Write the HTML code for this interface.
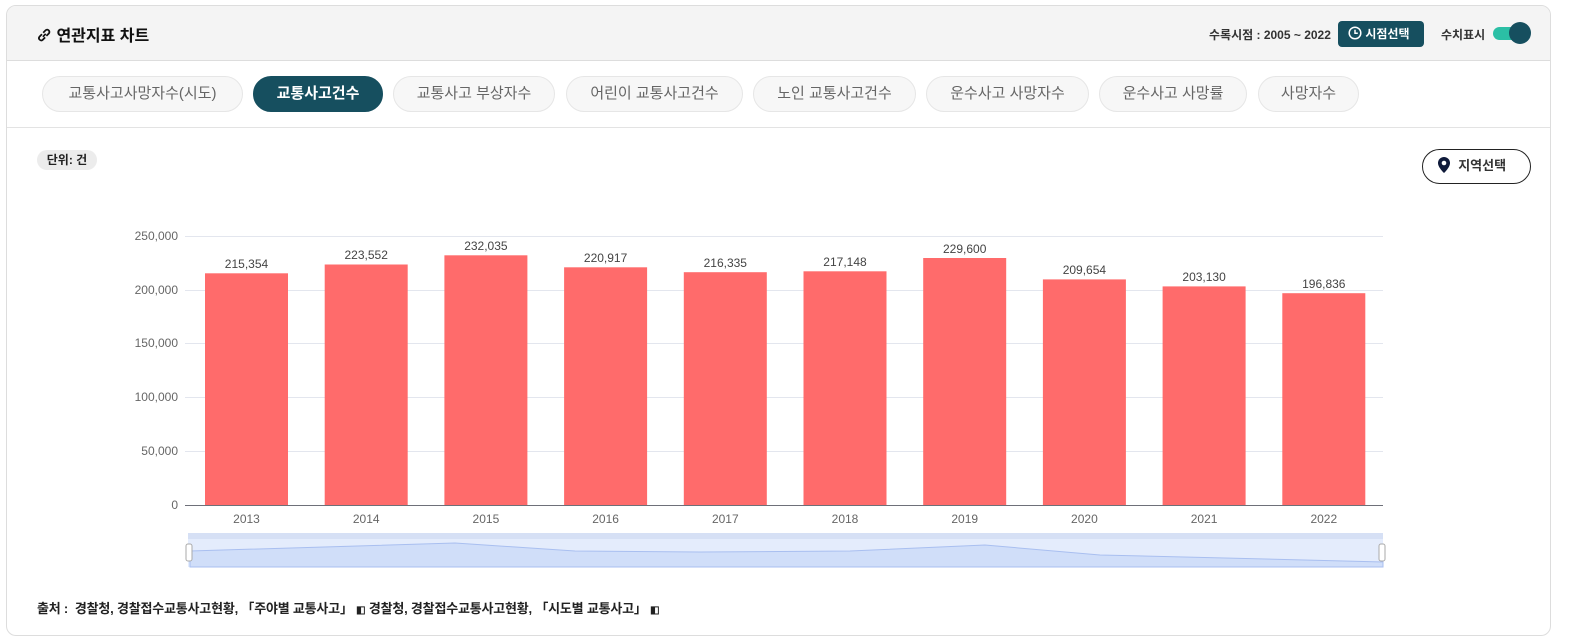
<!DOCTYPE html>
<html><head><meta charset="utf-8">
<style>
*{box-sizing:border-box;margin:0;padding:0}
body{width:1572px;height:642px;background:#fff;font-family:"Liberation Sans","Noto Sans CJK KR",sans-serif;position:relative;overflow:hidden}
.card{position:absolute;left:6px;top:5px;width:1545px;height:631px;border:1px solid #ddd;border-radius:10px;overflow:hidden;background:#fff}
.hdr{position:absolute;left:0;top:0;width:100%;height:55px;background:#f4f4f4;border-bottom:1px solid #ddd}
.title{position:absolute;left:29px;top:16px;font-size:16px;font-weight:bold;color:#111}
.tabs{position:absolute;left:0;top:55px;width:100%;height:67px;border-bottom:1px solid #e3e3e3}
.tab{position:absolute;top:15px;height:36px;border:1px solid #e6e6e6;background:#f7f7f7;border-radius:18px;font-size:15px;color:#666;text-align:center;line-height:34px}
.tab.on{background:#164f5f;color:#fff;border-color:#164f5f;font-weight:bold}
.abs{position:absolute}
</style></head><body>
<div class="card">
 <div class="hdr">
  <div class="title"><svg width="16" height="16" viewBox="0 0 14 14" style="vertical-align:-2px"><g fill="none" stroke="#111" stroke-width="1.5"><path d="M6 8.5 L8.5 6"/><path d="M5.2 6.3 L3 8.5 a2 2 0 0 0 2.8 2.8 L8 9.1"/><path d="M6.3 5 L8.5 2.8 a2 2 0 0 1 2.8 2.8 L9.1 7.8"/></g></svg> 연관지표 차트</div>
  <div class="abs" style="left:1202px;top:20px;font-size:12px;font-weight:bold;color:#333">수록시점 : 2005 ~ 2022</div>
  <div class="abs" style="left:1331px;top:15px;width:86px;height:26px;background:#164f5f;border-radius:4px;color:#fff;font-size:12px;font-weight:bold;line-height:26px;padding-left:10px"><svg width="14" height="14" viewBox="0 0 14 14" style="vertical-align:-2px"><circle cx="7" cy="7" r="5.8" fill="none" stroke="#fff" stroke-width="1.5"/><path d="M7 3.8V7.3H9.8" fill="none" stroke="#fff" stroke-width="1.5"/></svg> 시점선택</div>
  <div class="abs" style="left:1434px;top:20px;font-size:12px;font-weight:bold;color:#333">수치표시</div>
  <div class="abs" style="left:1486px;top:21px;width:26px;height:13px;background:#2bbfa5;border-radius:7px"></div>
  <div class="abs" style="left:1502px;top:16px;width:22px;height:22px;background:#164f5f;border-radius:50%"></div>
 </div>
 <div class="tabs">
  <div class="tab" style="left:35px;width:201px">교통사고사망자수(시도)</div>
  <div class="tab on" style="left:246px;width:130px">교통사고건수</div>
  <div class="tab" style="left:386px;width:162px">교통사고 부상자수</div>
  <div class="tab" style="left:559px;width:177px">어린이 교통사고건수</div>
  <div class="tab" style="left:746px;width:163px">노인 교통사고건수</div>
  <div class="tab" style="left:919px;width:163px">운수사고 사망자수</div>
  <div class="tab" style="left:1092px;width:148px">운수사고 사망률</div>
  <div class="tab" style="left:1251px;width:101px">사망자수</div>
 </div>
 <div class="abs" style="left:30px;top:144px;width:60px;height:20px;background:#ececec;border-radius:10px;font-size:12px;font-weight:bold;color:#222;text-align:center;line-height:20px">단위: 건</div>
 <div class="abs" style="left:1415px;top:143px;width:109px;height:35px;border:1.5px solid #222;border-radius:18px;font-size:13px;font-weight:bold;color:#333;line-height:32px;padding-left:14px"><svg width="14" height="18" viewBox="0 0 14 18" style="vertical-align:-4px"><path d="M7 1a6 6 0 0 0-6 6c0 4.5 6 10 6 10s6-5.5 6-10a6 6 0 0 0-6-6z" fill="#0f1a3a"/><circle cx="7" cy="7" r="2.3" fill="#fff"/></svg>&nbsp; 지역선택</div>
 <div class="abs" style="left:30px;top:592px;font-size:13px;font-weight:bold;color:#222;letter-spacing:-0.2px;white-space:nowrap">출처 :&nbsp; 경찰청, 경찰접수교통사고현황, 「주야별 교통사고」 <span style="font-size:10px">&#9703;</span> 경찰청, 경찰접수교통사고현황, 「시도별 교통사고」 <span style="font-size:10px">&#9703;</span></div>
</div>
<svg class="abs" style="left:0;top:0" width="1572" height="642" font-family="Liberation Sans, sans-serif">
 <g stroke="#e3e6ee" stroke-width="1">
  <line x1="185" x2="1383" y1="236.5" y2="236.5"/><line x1="185" x2="1383" y1="290.5" y2="290.5"/>
  <line x1="185" x2="1383" y1="343.5" y2="343.5"/><line x1="185" x2="1383" y1="397.5" y2="397.5"/>
  <line x1="185" x2="1383" y1="451.5" y2="451.5"/>
 </g>
 <g font-size="12" fill="#666" text-anchor="end">
  <text x="178" y="240">250,000</text><text x="178" y="294">200,000</text><text x="178" y="347">150,000</text>
  <text x="178" y="401">100,000</text><text x="178" y="455">50,000</text><text x="178" y="509">0</text>
 </g>
 <g fill="#ff6b6b">
  <rect x="205" y="273.3" width="83" height="231.7"/><rect x="324.7" y="264.5" width="83" height="240.5"/>
  <rect x="444.4" y="255.3" width="83" height="249.7"/><rect x="564.1" y="267.3" width="83" height="237.7"/>
  <rect x="683.8" y="272.2" width="83" height="232.8"/><rect x="803.5" y="271.3" width="83" height="233.7"/>
  <rect x="923.2" y="258" width="83" height="247"/><rect x="1042.9" y="279.4" width="83" height="225.6"/>
  <rect x="1162.6" y="286.4" width="83" height="218.6"/><rect x="1282.3" y="293.2" width="83" height="211.8"/>
 </g>
 <line x1="185" x2="1383" y1="505.5" y2="505.5" stroke="#6e7079"/>
 <g font-size="12" fill="#444" text-anchor="middle">
  <text x="246.5" y="268">215,354</text><text x="366.2" y="259">223,552</text><text x="485.9" y="250">232,035</text>
  <text x="605.6" y="262">220,917</text><text x="725.3" y="267">216,335</text><text x="845" y="266">217,148</text>
  <text x="964.7" y="253">229,600</text><text x="1084.4" y="274">209,654</text><text x="1204.1" y="281">203,130</text>
  <text x="1323.8" y="288">196,836</text>
 </g>
 <g font-size="12" fill="#666" text-anchor="middle">
  <text x="246.5" y="523">2013</text><text x="366.2" y="523">2014</text><text x="485.9" y="523">2015</text>
  <text x="605.6" y="523">2016</text><text x="725.3" y="523">2017</text><text x="845" y="523">2018</text>
  <text x="964.7" y="523">2019</text><text x="1084.4" y="523">2020</text><text x="1204.1" y="523">2021</text>
  <text x="1323.8" y="523">2022</text>
 </g>
 <rect x="188" y="533" width="1195" height="34" fill="#e4ecfc"/>
 <rect x="188" y="533" width="1195" height="6" fill="#d6e0f5"/>
 <path d="M190 551 L455 543 L575 551 L700 552 L850 551 L985 545 L1100 555 L1225 558 L1383 562 L1383 567 L190 567Z" fill="#d0def9" stroke="#a9bff0" stroke-width="1"/>
 <rect x="186" y="544" width="6" height="17" rx="2" fill="#fff" stroke="#aaa"/>
 <rect x="1379" y="544" width="6" height="17" rx="2" fill="#fff" stroke="#aaa"/>
</svg>
</body></html>
